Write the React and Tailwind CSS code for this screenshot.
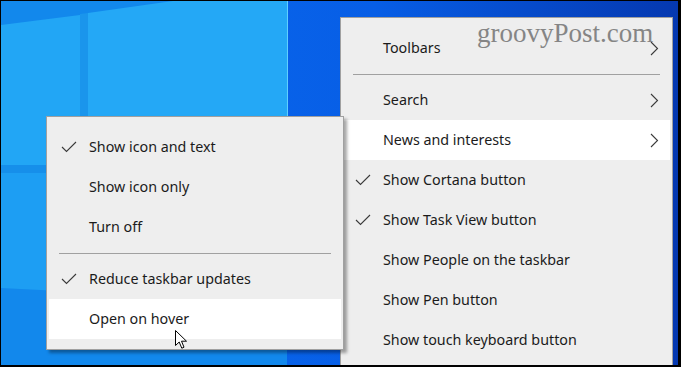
import React from 'react';

const Check = () => (
  <svg width="16" height="12" viewBox="0 0 16 12" fill="none">
    <path d="M1 6 L5.5 10.5 L15 1" stroke="#3a3a3a" strokeWidth="1.1" />
  </svg>
);

const Chevron = () => (
  <svg width="9" height="15" viewBox="0 0 9 15" fill="none">
    <path d="M1 1 L7.5 7.5 L1 14" stroke="#3a3a3a" strokeWidth="1.1" />
  </svg>
);

const Item = ({ label, checked, arrow, hot }) => (
  <div className={`flex items-center h-10 ${hot ? 'bg-white' : ''}`}>
    <div className="w-10 pl-3 flex items-center">{checked && <Check />}</div>
    <span className="flex-1 text-[14.3px] text-[#1b1b1b] whitespace-nowrap -mt-px">{label}</span>
    {arrow && (
      <div className="pr-[11px] flex items-center">
        <Chevron />
      </div>
    )}
  </div>
);

const Separator = () => (
  <div className="h-3 flex items-center px-[10px]">
    <div className="h-px w-full bg-[#a0a0a0]" />
  </div>
);

const Wallpaper = () => (
  <svg className="absolute inset-0" width="677" height="364" viewBox="1 1 677 364">
    <defs>
      <linearGradient id="dark" x1="0" y1="0" x2="1" y2="0">
        <stop offset="0" stopColor="#0a6cf0" />
        <stop offset="0.55" stopColor="#075ee6" />
        <stop offset="1" stopColor="#0538b0" />
      </linearGradient>
    </defs>
    <rect x="0" y="0" width="681" height="367" fill="url(#dark)" />
    <polygon points="0,0 287,0 287,367 0,367" fill="#1288ec" />
    <polygon points="0,25 80,15 80,165 0,165" fill="#22a6f5" />
    <polygon points="80,14 88,13 88,173 80,173" fill="#1a95ec" />
    <polygon points="0,165 287,165 287,173 0,173" fill="#168fea" />
    <polygon points="88,13 180,0 287,0 287,165 88,165" fill="#24a8f6" />
    <polygon points="0,173 80,173 80,292 0,288" fill="#1d9ef3" />
    <polygon points="88,173 287,173 287,345 88,305" fill="#1fa1f4" />
    <line x1="287.5" y1="0" x2="287.5" y2="345" stroke="#5fd0ff" strokeWidth="1" />
  </svg>
);

const Cursor = () => (
  <svg width="13" height="20" viewBox="0 0 13 20" fill="none">
    <path
      d="M0.5 0.5 L0.5 15.5 L4.2 12 L6.8 18.2 L9 17.2 L6.5 11.2 L11.5 11.2 Z"
      fill="#ffffff"
      stroke="#000000"
      strokeWidth="1"
      strokeLinejoin="round"
    />
  </svg>
);

export default function App() {
  return (
    <div
      className="relative w-[681px] h-[367px] overflow-hidden border-t border-l border-r-[3px] border-b-2 border-black"
      style={{ fontFamily: '"Noto Sans", "Open Sans", sans-serif' }}
    >
      <Wallpaper />

      <div className="absolute left-[339px] top-[16px] w-[333px] bg-[#eeeeee] border border-[#a0a0a0] py-[10px] px-[2px]">
        <Item label="Toolbars" arrow />
        <Separator />
        <Item label="Search" arrow />
        <Item label="News and interests" arrow hot />
        <Item label="Show Cortana button" checked />
        <Item label="Show Task View button" checked />
        <Item label="Show People on the taskbar" />
        <Item label="Show Pen button" />
        <Item label="Show touch keyboard button" />
        <Separator />
      </div>

      <div
        className="absolute left-[476px] top-[19px] text-[27px] leading-none text-[#858585]"
        style={{ fontFamily: '"Liberation Serif", serif' }}
      >
        groovyPost.com
      </div>

      <div className="absolute left-[45px] top-[115px] w-[298px] bg-[#eeeeee] border border-[#a0a0a0] py-[10px] px-[2px] shadow-[3px_3px_3px_rgba(0,0,0,0.35)]">
        <Item label="Show icon and text" checked />
        <Item label="Show icon only" />
        <Item label="Turn off" />
        <Separator />
        <Item label="Reduce taskbar updates" checked />
        <Item label="Open on hover" hot />
      </div>

      <div className="absolute left-[174px] top-[329px]">
        <Cursor />
      </div>
    </div>
  );
}
